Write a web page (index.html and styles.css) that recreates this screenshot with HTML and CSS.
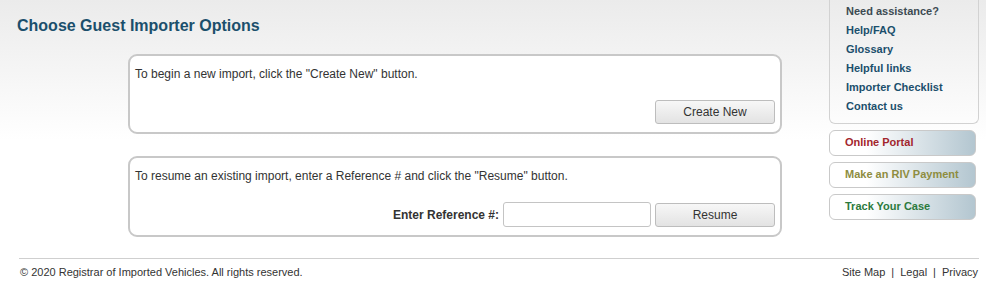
FILE: index.html
```html
<!DOCTYPE html>
<html lang="en">
<head>
    <meta charset="UTF-8">
    <title>Choose Guest Importer Options</title>
    <link rel="stylesheet" href="styles.css">
</head>
<body>
    <div class="page">
        <div class="main">
            <h1 class="title">Choose Guest Importer Options</h1>

            <div class="panel">
                <p>To begin a new import, click the "Create New" button.</p>
                <div class="actions">
                    <button type="button" class="btn">Create New</button>
                </div>
            </div>

            <div class="panel">
                <p>To resume an existing import, enter a Reference # and click the "Resume" button.</p>
                <div class="actions">
                    <label for="refnum">Enter Reference #:</label>
                    <input type="text" id="refnum" class="ref-input">
                    <button type="button" class="btn">Resume</button>
                </div>
            </div>
        </div>

        <div class="sidebar">
            <div class="help-box">
                <div class="help-head">Need assistance?</div>
                <a href="#">Help/FAQ</a>
                <a href="#">Glossary</a>
                <a href="#">Helpful links</a>
                <a href="#">Importer Checklist</a>
                <a href="#">Contact us</a>
            </div>
            <a href="#" class="side-btn portal">Online Portal</a>
            <a href="#" class="side-btn payment">Make an RIV Payment</a>
            <a href="#" class="side-btn track">Track Your Case</a>
        </div>
    </div>

    <div class="footer">
        <span>&copy; 2020 Registrar of Imported Vehicles. All rights reserved.</span>
        <span class="footer-links">
            <a href="#">Site Map</a><span class="sep">|</span><a href="#">Legal</a><span class="sep">|</span><a href="#">Privacy</a>
        </span>
    </div>
</body>
</html>
```

FILE: styles.css
```css
body {
    margin: 0;
    font-family: "Liberation Sans", Arial, sans-serif;
    font-size: 12px;
    color: #333;
    background: linear-gradient(#ebebeb, #ffffff 140px) no-repeat;
    background-color: #fff;
}

.page {
    display: flex;
}

.main {
    flex: 1;
}

.title {
    margin: 0;
    padding: 16px 0 0 17px;
    font-size: 16px;
    font-weight: bold;
    color: #1b4f6c;
    line-height: 20px;
}

.panel {
    margin: 18px 0 0 128px;
    width: 654px;
    background: #fff;
    border: 2px solid #c8c8c8;
    border-radius: 9px;
    padding: 11px 5px 8px 5px;
    box-sizing: border-box;
}

.panel + .panel {
    margin-top: 22px;
}

.panel p {
    margin: 0;
    line-height: 14px;
}

.actions {
    display: flex;
    justify-content: flex-end;
    align-items: center;
    gap: 4px;
    margin-top: 19px;
}

.actions label {
    font-weight: bold;
    font-size: 12px;
    color: #333;
}

.btn {
    width: 120px;
    height: 24px;
    font-family: "Liberation Sans", Arial, sans-serif;
    font-size: 12px;
    color: #333;
    background: linear-gradient(#f7f7f7, #e3e3e3);
    border: 1px solid #bdbdbd;
    border-radius: 3px;
    padding: 0;
}

.ref-input {
    width: 148px;
    height: 25px;
    box-sizing: border-box;
    border: 1px solid #c4c4c4;
    border-radius: 3px;
    background: #fff;
}

.sidebar {
    width: 150px;
    margin-right: 7px;
    display: flex;
    flex-direction: column;
}

.help-box {
    border: 1px solid #d2d2d2;
    border-top: none;
    border-radius: 0 0 6px 6px;
    padding: 2px 15px 9px 16px;
    height: 124px;
    box-sizing: border-box;
    margin-bottom: 6px;
}

.help-box a,
.help-head {
    display: block;
    font-size: 11px;
    font-weight: bold;
    line-height: 19px;
    color: #1b4f6c;
    text-decoration: none;
}

.help-head {
    color: #3c4a52;
}

.side-btn {
    display: block;
    height: 26px;
    line-height: 23px;
    box-sizing: border-box;
    padding-left: 15px;
    border: 1px solid #c9c9c9;
    border-radius: 6px;
    background: linear-gradient(to right, #ffffff 25%, #b3c6d0);
    font-size: 11px;
    font-weight: bold;
    text-decoration: none;
    margin-bottom: 6px;
    width: 147px;
}

.portal { color: #a2262d; }
.payment { color: #8e8d3f; }
.track { color: #2c7a3d; }

.footer {
    margin: 21px 7px 0 19px;
    border-top: 1px solid #cfcfcf;
    display: flex;
    justify-content: space-between;
    padding: 7px 1px 0 1px;
    font-size: 11px;
    color: #333;
}

.footer-links a {
    color: #333;
    text-decoration: none;
}

.sep {
    margin: 0 6px;
}
```
